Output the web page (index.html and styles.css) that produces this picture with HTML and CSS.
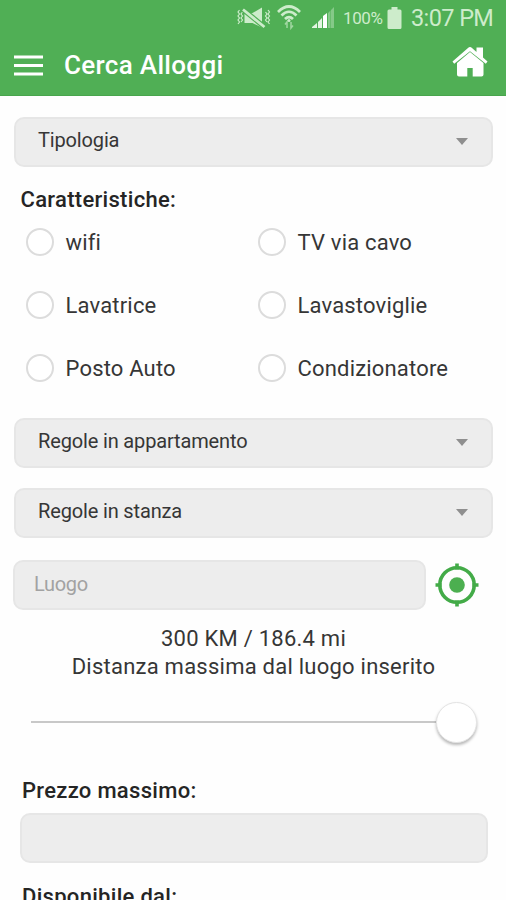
FILE: index.html
```html
<!DOCTYPE html>
<html lang="it">
<head>
<meta charset="utf-8">
<title>Cerca Alloggi</title>
<link rel="stylesheet" href="styles.css">
</head>
<body>
<header class="header">
  <div class="status">
    <svg class="status-mute" width="34" height="22" viewBox="0 0 34 22" fill="none" stroke="currentColor">
      <path d="M2.500 3l-1.500 2 1.500 2-1.500 2 1.500 2-1.500 2 1.500 2-1.500 2M5.500 5l-1.500 2 1.500 2-1.500 2 1.500 2-1.500 2M28.500 5l1.500 2-1.500 2 1.500 2-1.500 2 1.500 2M31 3l1.500 2-1.500 2 1.500 2-1.500 2 1.500 2-1.500 2 1.500 2" stroke-width="1.200"/>
      <path d="M7.500 6h8L25 .5v20L15.500 16h-8z" fill="currentColor" stroke="none"/>
      <path d="M6 2.500l21.500 17.500" stroke="#50af55" stroke-width="5"/>
      <path d="M6 2.500l21.500 17.500" stroke-width="2.800"/>
    </svg>
    <svg class="status-wifi" width="26" height="26" viewBox="0 0 26 26" fill="none" stroke="currentColor">
      <path d="M2 8Q13-3 24 8M5.500 11.500Q13 4 20.500 11.500M9 15Q13 11 17 15" stroke-width="2.700"/>
      <path d="M11 24v-6l-2 2.500M15 18v6l2-2.500" stroke-width="1.500" opacity=".65"/>
      <circle cx="13" cy="16.500" r="1.500" fill="currentColor" stroke="none"/>
    </svg>
    <svg class="status-signal" width="24" height="22" viewBox="0 0 24 22">
      <path d="M0 21v-1l5-4v5zM6 21v-6l4-4v10z" fill="#e3f5e2"/>
      <path d="M11 21V9l4-3v15z" fill="#fff"/>
      <path d="M16 21V6l2.500-2.500v17.500zM19 21V3l3-3v21z" fill="#85c988"/>
    </svg>
    <span class="percent">100%</span>
    <svg class="status-battery" width="15" height="22" viewBox="0 0 15 22" fill="currentColor">
      <path d="M4.500 0h6v2.500H13q1.500 0 1.500 1.500v16.500q0 1.500-1.500 1.500H2Q.5 22 .5 20.500V4q0-1.500 1.500-1.500h2.500z"/>
    </svg>
    <span class="clock">3:07 PM</span>
  </div>
  <div class="bar">
    <svg class="menu" width="29" height="22" viewBox="0 0 29 22" fill="#fff">
      <path d="M0 .5h29v3H0zM0 9h29v3H0zM0 17.500h29v3H0z"/>
    </svg>
    <h1 class="title">Cerca Alloggi</h1>
    <svg class="home" width="36" height="30" viewBox="0 0 36 30" fill="#fff">
      <path d="M18 0Q19 0 20 1l4.500 4V.5H31v10l4.500 4-1.700 2.300L18 4.200 2.200 16.800l-1.700-2.300L16 1q1-1 2-1z"/>
      <path d="M18 5l13.500 11v11.500q0 2-2 2H20.700v-8.500h-5.400v8.500H7q-2 0-2-2V16z"/>
    </svg>
  </div>
</header>
<main class="form">
  <div class="field select type"><span class="type-label">Tipologia</span><i class="caret"></i></div>
  <h2 class="heading features-heading">Caratteristiche:</h2>
  <div class="features">
    <label class="option"><i class="radio"></i><span>wifi</span></label>
    <label class="option"><i class="radio"></i><span>TV via cavo</span></label>
    <label class="option"><i class="radio"></i><span>Lavatrice</span></label>
    <label class="option"><i class="radio"></i><span>Lavastoviglie</span></label>
    <label class="option"><i class="radio"></i><span>Posto Auto</span></label>
    <label class="option"><i class="radio"></i><span>Condizionatore</span></label>
  </div>
  <div class="field select house"><span>Regole in appartamento</span><i class="caret"></i></div>
  <div class="field select room"><span>Regole in stanza</span><i class="caret"></i></div>
  <div class="place">
    <div class="field place-input">Luogo</div>
    <svg class="locate" width="44" height="44" viewBox="0 0 44 44" fill="none" stroke="#43ab48">
      <circle cx="22" cy="22" r="17.200" stroke-width="3.600"/>
      <path d="M22 .5v6M22 37.500v6M.5 22h6M37.500 22h6" stroke-width="3.600"/>
      <circle cx="22" cy="22" r="7.800" fill="#4caf50" stroke="none"/>
    </svg>
  </div>
  <div class="distance">
    <div class="km">300 KM / 186.4 mi</div>
    <div class="caption">Distanza massima dal luogo inserito</div>
  </div>
  <div class="slider"><div class="track"></div><div class="thumb"></div></div>
  <h2 class="heading price-heading">Prezzo massimo:</h2>
  <div class="field price"></div>
  <h2 class="heading date-heading">Disponibile dal:</h2>
</main>
</body>
</html>
```
FILE: styles.css
```css
* { box-sizing: border-box; }
html, body { height: 900px; overflow: hidden; }
body {
  margin: 0;
  background: #fefefe;
  color: #363636;
  font-family: Roboto, sans-serif;
}
svg { display: block; flex: none; }
h1, h2 { margin: 0; }
span, h1, h2 { white-space: nowrap; }

.header {
  height: 96px;
  background: #50af55;
  border-bottom: 1px solid #48a54d;
}
.status {
  display: flex;
  align-items: center;
  height: 36px;
  padding-left: 237px;
  color: #cdeccb;
}
.status-mute { margin-top: -1px; }
.status-wifi { margin: -2px 0 0 5px; }
.status-signal { margin: 0 0 0 10px; }
.percent { width: 40px; margin-left: 7px; font-size: 17px; letter-spacing: -.4px; }
.status-battery { margin: -1px 0 0 4px; }
.clock { margin-left: 9px; font-size: 23.5px; letter-spacing: -.6px; }
.bar {
  display: flex;
  align-items: center;
  height: 58px;
  padding: 0 18px 0 14px;
}
.menu { margin-top: 1px; }
.title {
  margin-left: 21px;
  color: #fff;
  font-size: 26px;
  font-weight: 500;
  letter-spacing: .32px;
}
.home { margin: -6px 0 0 auto; }

.form { padding-top: 21px; }
.field {
  height: 50px;
  background: #ededed;
  border: 2px solid #e6e6e6;
  border-radius: 10px;
}
.select {
  display: flex;
  align-items: center;
  justify-content: space-between;
  margin: 0 13px 0 14px;
  padding: 0 23px 4px 22px;
  font-size: 20px;
  letter-spacing: -.15px;
}
.caret {
  margin-top: 3px;
  border: 6.5px solid transparent;
  border-top: 7px solid #8f8f8f;
  border-bottom: 0;
}
.heading {
  height: 28px;
  color: #252525;
  font-size: 22px;
  font-weight: 500;
  letter-spacing: .3px;
  line-height: 28px;
}
.features-heading { margin: 19px 0 0 20.5px; }
.features {
  display: grid;
  grid-template-columns: 232px 1fr;
  grid-auto-rows: 63px;
  margin-left: 26px;
  margin-top: -3px;
}
.option {
  display: flex;
  align-items: center;
  gap: 11.5px;
  font-size: 22px;
  letter-spacing: .18px;
}
.radio {
  width: 28px;
  height: 28px;
  margin-top: -1px;
  background: #fff;
  border: 2px solid #dcdcdc;
  border-radius: 50%;
}
.house { margin-top: 18px; }
.room { margin-top: 20px; }
.place {
  display: flex;
  align-items: center;
  gap: 9px;
  margin: 22px 0 0 13px;
}
.place-input {
  width: 413px;
  padding: 0 0 0 19px;
  color: #a2a2a2;
  font-size: 20px;
  letter-spacing: -.3px;
  line-height: 45px;
}
.distance {
  margin: 15px 0 0 1px;
  font-size: 22px;
  letter-spacing: .24px;
  line-height: 28px;
  text-align: center;
}
.slider {
  display: flex;
  align-items: center;
  height: 42px;
  margin: 20px 0 0 31px;
}
.track { width: 405px; height: 2.5px; background: #c8c8c8; }
.thumb {
  width: 41px;
  height: 41px;
  background: #fff;
  border: 1px solid #e4e4e4;
  border-radius: 50%;
  box-shadow: 0 2px 3px rgba(0, 0, 0, .28);
}
.price-heading { margin: 34px 0 0 22px; }
.price { margin: 8px 18px 0 20px; }
.date-heading { margin: 20px 0 0 22px; }
```
